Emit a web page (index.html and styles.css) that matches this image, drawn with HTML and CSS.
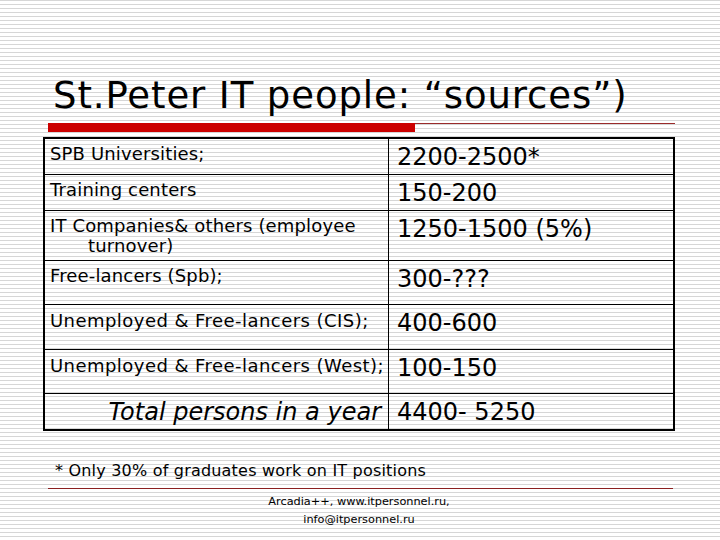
FILE: index.html
```html
<!DOCTYPE html>
<html>
<head>
<meta charset="utf-8">
<link rel="stylesheet" href="styles.css">
</head>
<body>
<div class="slide">
  <h1 class="title">St.Peter IT people: “sources”)</h1>
  <div class="rule"><div class="rule-bar"></div></div>
  <div class="grid">
    <div class="cell label">SPB Universities;</div><div class="cell value">2200-2500*</div>
    <div class="cell label">Training centers</div><div class="cell value">150-200</div>
    <div class="cell label">IT Companies&amp; others (employee<br>turnover)</div><div class="cell value">1250-1500 (5%)</div>
    <div class="cell label">Free-lancers (Spb);</div><div class="cell value">300-???</div>
    <div class="cell label wide">Unemployed &amp; Free-lancers (CIS);</div><div class="cell value">400-600</div>
    <div class="cell label wide">Unemployed &amp; Free-lancers (West);</div><div class="cell value">100-150</div>
    <div class="cell label total last">Total persons in a year</div><div class="cell value last">4400- 5250</div>
  </div>
  <p class="note">* Only 30% of graduates work on IT positions</p>
  <div class="footer-rule"></div>
  <p class="credit">Arcadia++, www.itpersonnel.ru,<br>info@itpersonnel.ru</p>
</div>
</body>
</html>
```
FILE: styles.css
```css
html, body {
  margin: 0;
  padding: 0;
}
body {
  width: 720px;
  height: 540px;
  overflow: hidden;
  background: repeating-linear-gradient(to bottom, #d6d6d6 0, #d6d6d6 1px, #ffffff 1px, #ffffff 4px);
  font-family: "DejaVu Sans", Verdana, sans-serif;
  color: #000;
}
.slide {
  padding-top: 77px;
}
.title {
  margin: 0 0 0 53px;
  font-size: 37px;
  font-weight: normal;
  line-height: 37px;
  letter-spacing: 0.9px;
  white-space: nowrap;
}
.rule {
  margin: 9px 0 0 48px;
  width: 627px;
  height: 9px;
  display: flex;
  background: linear-gradient(#9a2a2a, #9a2a2a) top left / 100% 1px no-repeat;
}
.rule-bar {
  width: 367px;
  background: #cc0000;
}
.grid {
  margin: 5px 0 0 43px;
  width: 632px;
  box-sizing: border-box;
  border: 2px solid #000;
  display: grid;
  grid-template-columns: 344px 1fr;
  grid-template-rows: 36px 36px 50px 44px 45px 44px 35px;
}
.cell {
  box-sizing: border-box;
  border-bottom: 1px solid #000;
  white-space: nowrap;
}
.cell.last {
  border-bottom: none;
}
.label {
  border-right: 1px solid #000;
  font-size: 18px;
  line-height: 20px;
  padding: 5px 4px 0 43px;
  text-indent: -38px;
  letter-spacing: 0.15px;
}
.label.wide {
  letter-spacing: 0.45px;
  padding-top: 6px;
}
.value {
  font-size: 24px;
  line-height: 24px;
  padding: 6px 0 0 8px;
}
.label.total {
  font-style: italic;
  font-size: 24px;
  line-height: 24px;
  text-align: right;
  text-indent: 0;
  letter-spacing: 0;
  padding: 6px 7px 0 0;
}
.note {
  margin: 30px 0 0 55px;
  font-size: 16px;
  line-height: 19px;
  letter-spacing: 0.2px;
}
.footer-rule {
  margin: 8px 0 0 48px;
  width: 625px;
  height: 1px;
  background: #8b2020;
}
.credit {
  margin: 4px 0 0 0;
  width: 718px;
  text-align: center;
  font-size: 11.3px;
  line-height: 18px;
}
```
